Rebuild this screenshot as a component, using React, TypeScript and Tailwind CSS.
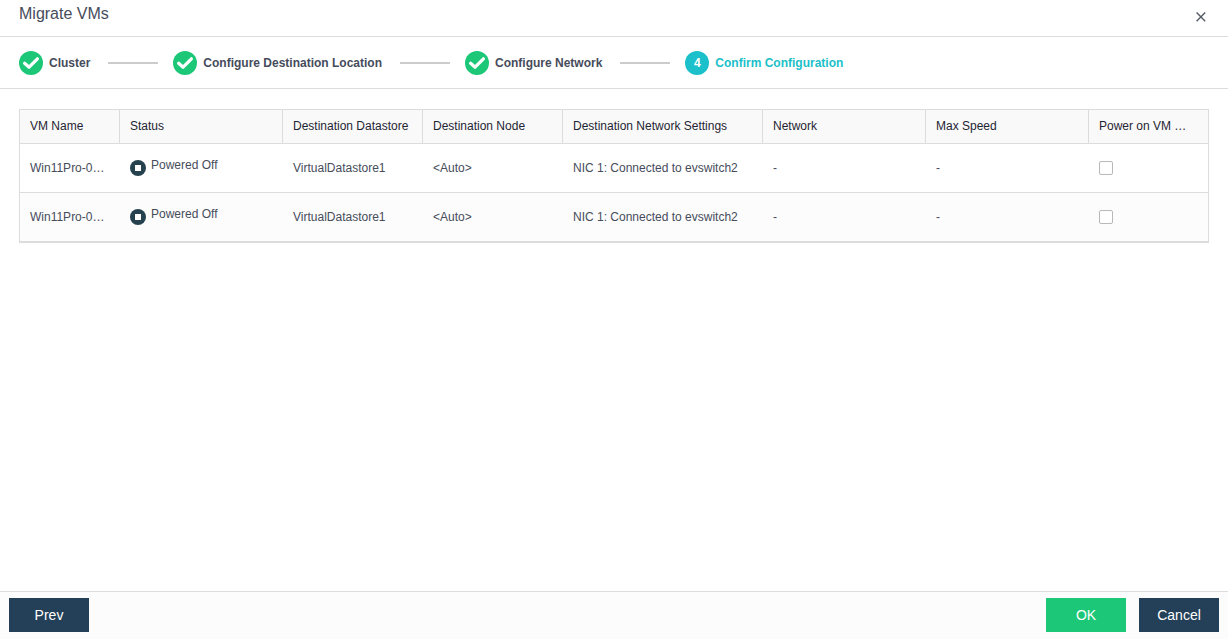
import { Fragment } from 'react';
import { clsx } from 'clsx';

const steps = [
  { label: 'Cluster', done: true },
  { label: 'Configure Destination Location', done: true },
  { label: 'Configure Network', done: true },
  { label: 'Confirm Configuration', done: false },
];

const columns = [
  { title: 'VM Name', width: 'w-[100px]' },
  { title: 'Status', width: '' },
  { title: 'Destination Datastore', width: 'w-[140px]' },
  { title: 'Destination Node', width: 'w-[140px]' },
  { title: 'Destination Network Settings', width: 'w-[200px]' },
  { title: 'Network', width: '' },
  { title: 'Max Speed', width: '' },
  { title: 'Power on VM …', width: 'w-[120px]' },
];

const vms = [
  { id: 1, name: 'Win11Pro-0…', datastore: 'VirtualDatastore1', node: '<Auto>', nic: 'NIC 1: Connected to evswitch2' },
  { id: 2, name: 'Win11Pro-0…', datastore: 'VirtualDatastore1', node: '<Auto>', nic: 'NIC 1: Connected to evswitch2' },
];

const CheckBadge = () => (
  <svg className="size-6 shrink-0" viewBox="0 0 24 24" fill="none" aria-hidden="true">
    <circle cx="12" cy="12" r="12" fill="#1cc777" />
    <path d="M5.6 12.2l4.5 4L18.4 7.8" stroke="#fff" strokeWidth="3.2" strokeLinecap="round" strokeLinejoin="round" />
  </svg>
);

const StoppedIcon = () => (
  <svg className="size-4 shrink-0" viewBox="0 0 16 16" aria-hidden="true">
    <circle cx="8" cy="8" r="8" fill="#26424f" />
    <rect x="5" y="5" width="6" height="6" fill="#fff" />
  </svg>
);

export default function App() {
  const cell = 'h-[49px] border-b border-[#dcdcdc] px-[10px] align-middle';

  return (
    <div className="flex min-h-screen flex-col bg-white font-['Liberation_Sans',Arial,sans-serif] text-xs text-[#464c5b]">
      <header className="flex h-[37px] items-start justify-between border-b border-[#dcdcdc] pr-[22px] pl-[19px]">
        <h1 className="pt-[2px] text-base">Migrate VMs</h1>
        <button type="button" aria-label="Close" className="mt-3">
          <svg className="size-[10px]" viewBox="0 0 10 10" fill="none" stroke="#555b66" strokeWidth="1.4" aria-hidden="true">
            <path d="M0.6 0.6l8.6 8.6M9.2 0.6L0.6 9.2" />
          </svg>
        </button>
      </header>

      <ol className="flex h-[52px] items-center border-b border-[#dcdcdc] px-[19px] font-bold">
        {steps.map((step, index) => (
          <Fragment key={step.label}>
            {index > 0 && <li aria-hidden="true" className="mr-[15px] ml-[18px] h-[2px] w-[50px] bg-[#cccccc]" />}
            <li className={clsx('flex items-center gap-[6px] whitespace-nowrap', !step.done && 'text-[#1bbfc9]')}>
              {step.done ? (
                <CheckBadge />
              ) : (
                <span className="flex size-6 items-center justify-center rounded-full bg-[#1bc0ca] text-white">{index + 1}</span>
              )}
              {step.label}
            </li>
          </Fragment>
        ))}
      </ol>

      <main className="flex-1 px-[19px] py-5">
        <table className="w-full table-fixed border-separate border-spacing-0 border-t border-b border-l border-[#dcdcdc] text-left">
          <thead>
            <tr>
              {columns.map((column) => (
                <th
                  key={column.title}
                  className={clsx(
                    'h-[34px] truncate border-r border-b border-[#dcdcdc] bg-[#f9f9f9] px-[10px] pb-[2px] align-middle font-normal text-[#1f2533]',
                    column.width,
                  )}
                >
                  {column.title}
                </th>
              ))}
            </tr>
          </thead>
          <tbody>
            {vms.map((vm) => (
              <tr key={vm.id} className="even:bg-[#fcfcfc]">
                <td className={cell}>{vm.name}</td>
                <td className={cell}>
                  <div className="flex items-center gap-[5px]">
                    <StoppedIcon />
                    <span className="pb-[6px]">Powered Off</span>
                  </div>
                </td>
                <td className={cell}>{vm.datastore}</td>
                <td className={cell}>{vm.node}</td>
                <td className={cell}>{vm.nic}</td>
                <td className={cell}>-</td>
                <td className={cell}>-</td>
                <td className={clsx(cell, 'border-r')}>
                  <input
                    type="checkbox"
                    aria-label="Power on VM"
                    className="block size-[14px] appearance-none rounded-xs border border-[#b8b8b8] bg-white checked:bg-[#1cc777]"
                  />
                </td>
              </tr>
            ))}
          </tbody>
        </table>
      </main>

      <footer className="flex h-12 items-start gap-[13px] border-t border-[#dcdcdc] bg-[#fcfcfc] px-[9px] pt-[6px] text-sm text-white">
        <button type="button" className="mr-auto h-[34px] w-20 bg-[#234058]">Prev</button>
        <button type="button" className="h-[34px] w-20 bg-[#1cc777]">OK</button>
        <button type="button" className="h-[34px] w-20 bg-[#234058]">Cancel</button>
      </footer>
    </div>
  );
}
